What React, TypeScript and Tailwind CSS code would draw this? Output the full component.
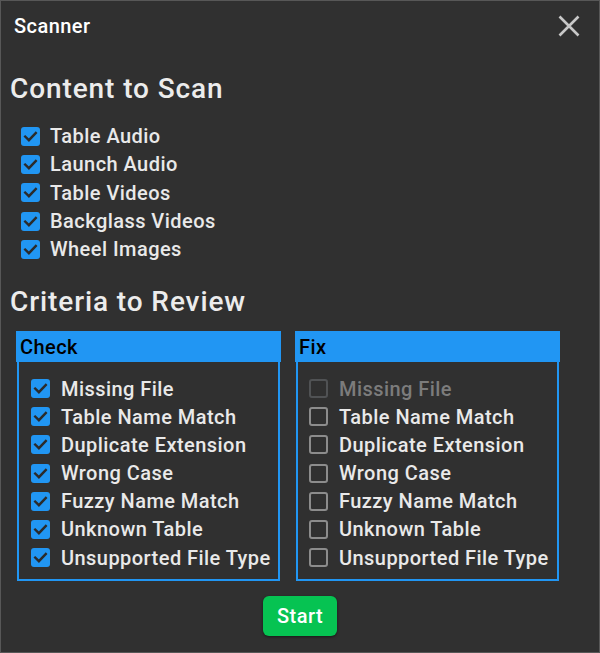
import React from "react";

const font = { fontFamily: "Roboto, 'Noto Sans', sans-serif" };

function Box({ state }: { state: "on" | "off" | "disabled" }) {
  if (state === "on") {
    return (
      <span className="w-[19px] h-[19px] rounded-[3px] bg-[#2196F3] flex items-center justify-center shrink-0">
        <svg width="19" height="19" viewBox="0 0 19 19">
          <path d="M4.2 9.6 L7.9 13.2 L14.8 6" fill="none" stroke="#2b2b2b" strokeWidth="2.4" strokeLinecap="square" />
        </svg>
      </span>
    );
  }
  return (
    <span
      className={
        "w-[19px] h-[19px] rounded-[3px] border-2 shrink-0 " +
        (state === "disabled" ? "border-[#505254]" : "border-[#8c8c8c]")
      }
    />
  );
}

function Row({ label, state, h, gap }: { label: string; state: "on" | "off" | "disabled"; h: string; gap: string }) {
  return (
    <div className={"flex items-center " + gap + " " + h}>
      <Box state={state} />
      <span
        className={
          "text-[20px] font-medium leading-none tracking-[0.45px] " +
          (state === "disabled" ? "text-[#7c7c7c]" : "text-[#e9e9e9]")
        }
      >
        {label}
      </span>
    </div>
  );
}

const content = ["Table Audio", "Launch Audio", "Table Videos", "Backglass Videos", "Wheel Images"];
const criteria = [
  "Missing File",
  "Table Name Match",
  "Duplicate Extension",
  "Wrong Case",
  "Fuzzy Name Match",
  "Unknown Table",
  "Unsupported File Type",
];

function Panel({ title, fix }: { title: string; fix?: boolean }) {
  return (
    <div className="w-[265px] flex flex-col">
      <div className="h-[31px] bg-[#2196F3] flex items-center pl-[4px] text-[20px] font-medium tracking-[0.45px] text-black">
        {title}
      </div>
      <div className={"mx-[1px] border-2 border-t-0 border-[#2196F3] pt-[12px] pb-[7px] " + (fix ? "pl-[11px]" : "pl-[12px]")}>
        {criteria.map((c, i) => (
          <Row
            key={c}
            label={c}
            h="h-[28.17px]"
            gap="gap-[11px]"
            state={fix ? (i === 0 ? "disabled" : "off") : "on"}
          />
        ))}
      </div>
    </div>
  );
}

export default function App() {
  return (
    <div style={font} className="w-[600px] h-[653px] bg-[#303030] border border-[#575757] flex flex-col overflow-hidden">
      <div className="h-[50px] flex items-center justify-between pl-[13px] pr-[19px] shrink-0">
        <span className="text-[20px] font-medium tracking-[0.45px] text-white">Scanner</span>
        <svg width="22" height="22" viewBox="0 0 22 22">
          <path d="M1.5 1.5 L20.5 20.5 M20.5 1.5 L1.5 20.5" stroke="#c8c8c8" strokeWidth="2.6" />
        </svg>
      </div>
      <div className="pl-[9px] mt-[22px] text-[28px] font-medium leading-[32px] tracking-[0.9px] text-[#ececec]">Content to Scan</div>
      <div className="pl-[20px] mt-[17px] flex flex-col">
        {content.map((c) => (
          <Row key={c} label={c} state="on" h="h-[28.3px]" gap="gap-[10px]" />
        ))}
      </div>
      <div className="pl-[9px] mt-[23px] text-[28px] font-medium leading-[32px] tracking-[0.9px] text-[#ececec]">Criteria to Review</div>
      <div className="flex gap-[14px] pl-[15px] mt-[13px]">
        <Panel title="Check" />
        <Panel title="Fix" fix />
      </div>
      <div className="flex justify-center mt-[15px]">
        <button className="w-[74px] h-[40px] rounded-[6px] bg-[#06c352] text-white text-[20px] font-medium tracking-[0.45px] shadow-[0_1px_3px_rgba(0,0,0,0.5)]">
          Start
        </button>
      </div>
    </div>
  );
}
